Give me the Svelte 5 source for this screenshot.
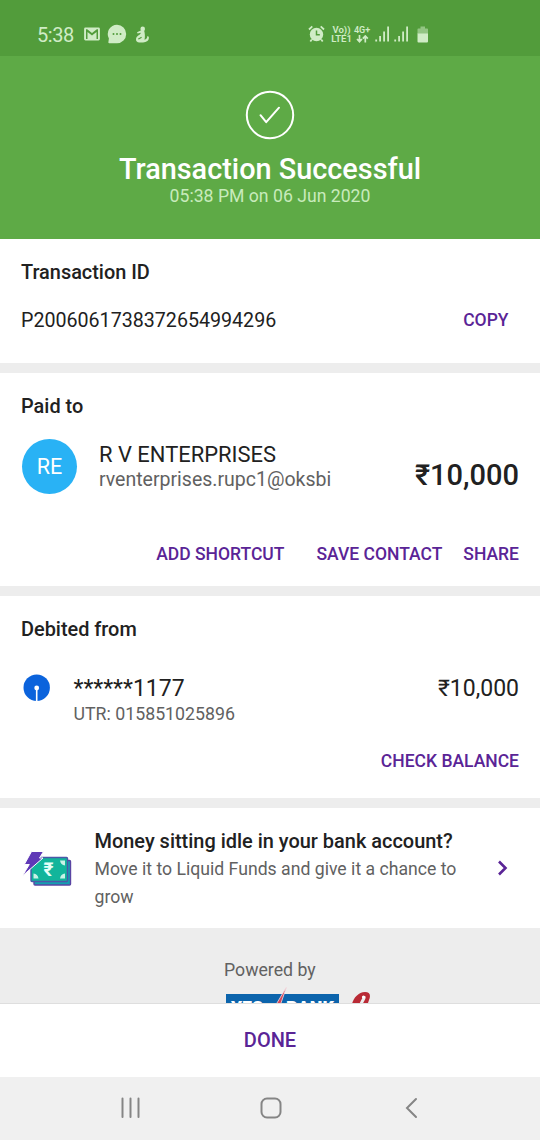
<script>
  const actions = ['ADD SHORTCUT', 'SAVE CONTACT', 'SHARE'];
</script>

<div class="screen">
  <div class="status">
    <span class="clock">5:38</span>
    <svg class="left-icons" width="66" height="20" viewBox="0 0 66 20">
      <path fill="#d0ecc6" fill-rule="evenodd" d="M1.500 3.500h13a1.400 1.400 0 0 1 1.400 1.400v10.200a1.400 1.400 0 0 1-1.400 1.400h-13A1.400 1.400 0 0 1 .1 15.100V4.900A1.400 1.400 0 0 1 1.500 3.500zM2 5.200v9.800h1.500V8L8 11.500l4.500-3.500v7H14V5.200h-1.200L8 9 3.200 5.200z" />
      <path fill="#d0ecc6" d="M33 .8a9.200 9.200 0 1 1 0 18.400H25.200c-.7 0-1-.5-.8-1.200l.5-3.500A9.200 9.200 0 0 1 33 .8z" />
      <g fill="#529c3b"><circle cx="29.500" cy="10" r="1" /><circle cx="33" cy="10" r="1" /><circle cx="36.500" cy="10" r="1" /></g>
      <g fill="#d0ecc6">
        <circle cx="58.700" cy="4.900" r="2.300" />
        <path d="M57.300 6.200l-4.300 2 .6 1.400 3.100-.9c.4 1.800-4.300 2.900-4.700 6.200-.3 2.300 1.300 3.500 3.300 3.500h3.700c3.300 0 6.500-2 5.800-5.700l-1.500-.7c.2 2-1.100 3.300-2.800 3.800.7-3 .5-6.700-.5-9.600z" />
      </g>
      <path d="M54.300 15.200c1.200-1 2.300-.8 3.200-2" stroke="#529c3b" stroke-width="1.100" fill="none" />
    </svg>
    <div class="right-icons">
      <svg width="17" height="18" viewBox="0 0 17 18">
        <circle cx="8.500" cy="9.500" r="6.700" fill="#d0ecc6" />
        <path d="M1 4.500L4.300 1.400M16 4.500l-3.300-3.100M3.800 14.500l-1.500 2M13.200 14.500l1.500 2" stroke="#d0ecc6" stroke-width="1.800" fill="none" />
        <path d="M8.500 5.500v4.300h3.300" stroke="#529c3b" stroke-width="1.500" fill="none" />
      </svg>
      <div class="volte"><span>Vo))</span><span>LTE1</span></div>
      <div class="data">
        <span>4G+</span>
        <svg width="13" height="8" viewBox="0 0 13 8"><path d="M3.500 0v6.500M1 4l2.500 2.700L6 4M9.300 7.500V1M6.800 3.700L9.300 1l2.500 2.700" fill="none" stroke="#d0ecc6" stroke-width="1.700" /></svg>
      </div>
      {#each [0, 1] as sim}
        <svg class="signal" width="15" height="16" viewBox="0 0 15 16"><path fill="#d0ecc6" d="M.3 13.500h1.800v2H.3zM4.200 10h1.800v5.500H4.200zM8.200 5.500H10v10H8.200zM12.200.5H14v15h-1.800z" /></svg>
      {/each}
      <svg class="battery" width="12" height="17" viewBox="0 0 12 17"><path fill="#93c583" d="M3.500.5h4.500v2h2.200a.8.8 0 0 1 .8.800V8H.500V3.300A.8.8 0 0 1 1.300 2.500h2.200z" /><path fill="#d0ecc6" d="M.5 7.500H11v8a1 1 0 0 1-1 1H1.500a1 1 0 0 1-1-1z" /></svg>
    </div>
  </div>

  <header class="hero">
    <svg width="50" height="50" viewBox="0 0 50 50" fill="none" stroke="#fff">
      <circle cx="25" cy="25" r="23.200" stroke-width="2" />
      <path d="M15.500 25.200l5.700 7L34 17.700" stroke-width="2" stroke-linecap="round" stroke-linejoin="round" />
    </svg>
    <h1>Transaction Successful</h1>
    <p>05:38 PM on 06 Jun 2020</p>
  </header>

  <section class="txn">
    <h2>Transaction ID</h2>
    <div class="row id-row">
      <span class="txid">P2006061738372654994296</span>
      <span class="link">COPY</span>
    </div>
  </section>

  <section class="paid">
    <h2>Paid to</h2>
    <div class="row payee">
      <div class="avatar">RE</div>
      <div class="who">
        <div class="name">R V ENTERPRISES</div>
        <div class="vpa">rventerprises.rupc1@oksbi</div>
      </div>
      <div class="total">₹10,000</div>
    </div>
    <div class="actions">
      {#each actions as label}
        <span class="link">{label}</span>
      {/each}
    </div>
  </section>

  <section class="debit">
    <h2>Debited from</h2>
    <div class="row account">
      <svg class="bank" width="28" height="28" viewBox="0 0 28 28">
        <circle cx="13.700" cy="13.700" r="13.200" fill="#0b63dc" />
        <circle cx="13.700" cy="14" r="2.400" fill="#fff" />
        <path d="M13.700 14v13" stroke="#fff" stroke-width="1.600" />
      </svg>
      <div class="who">
        <div class="acct">******1177</div>
        <div class="utr">UTR: 015851025896</div>
      </div>
      <div class="amount">₹10,000</div>
    </div>
    <div class="balance"><span class="link">CHECK BALANCE</span></div>
  </section>

  <section class="promo">
    <svg class="cash" width="50" height="37" viewBox="0 0 50 37">
      <rect x="12" y="9.500" width="36.500" height="24.500" rx="1" fill="#149fb0" stroke="#5a45a3" stroke-width="1.400" />
      <rect x="9" y="6.500" width="36.500" height="24" rx="1" fill="#12b59b" stroke="#4c58a8" stroke-width="1.400" />
      <path fill="#c9f3e7" d="M38 9.500h5v5a6 6 0 0 1-5-5zM43 22.500v5h-5a6 6 0 0 1 5-5zM11.500 22.500v5h5a6 6 0 0 0-5-5z" />
      <text x="26.500" y="24.500" text-anchor="middle">₹</text>
      <path d="M9.500.500H21.500L17.500 7H21L.3 25l7-11.500H2.300z" fill="#6039b7" stroke="#fff" stroke-width="1" />
    </svg>
    <div class="promo-copy">
      <h3>Money sitting idle in your bank account?</h3>
      <p>Move it to Liquid Funds and give it a chance to grow</p>
    </div>
    <svg class="chevron" width="12" height="18" viewBox="0 0 12 18"><path d="M2 2.500L8.500 9 2 15.500" fill="none" stroke="#5a2496" stroke-width="2.600" /></svg>
  </section>

  <div class="powered">
    <span>Powered by</span>
    <svg width="150" height="45" viewBox="0 0 150 45">
      <rect x="1" y="8" width="113" height="31" fill="#0c64ac" />
      <g class="wordmark"><text x="6" y="27.500" textLength="32" lengthAdjust="spacingAndGlyphs">YES</text><text x="61" y="27.500" textLength="48" lengthAdjust="spacingAndGlyphs">BANK</text></g>
      <path d="M49 22L61.500 1 56 17l-5 12z" fill="#d64355" stroke="#f2dfe5" stroke-width=".8" />
      <path d="M127 18c1-5 6-12 13-12 5 0 6 3 4 8l-2 6h-6c3-4 6-9 4-10-2 0-4 4-6 9z" fill="#b92a35" />
      <circle cx="138.500" cy="11" r="1.600" fill="#fff" />
    </svg>
  </div>

  <div class="done">DONE</div>

  <nav>
    <svg width="22" height="24" viewBox="0 0 22 24"><path d="M2.500 2.500v18.500M10.500 2.500v18.500M18.500 2.500v18.500" stroke="#858585" stroke-width="2" stroke-linecap="round" /></svg>
    <svg width="24" height="24" viewBox="0 0 24 24"><rect x="2.500" y="2.500" width="19" height="19" rx="5.500" fill="none" stroke="#858585" stroke-width="2" /></svg>
    <svg width="16" height="24" viewBox="0 0 16 24"><path d="M12 3L3 12l9 9" fill="none" stroke="#858585" stroke-width="2" stroke-linecap="round" /></svg>
  </nav>
</div>

<style>
  :global(body) { margin: 0; background: #ededed; }
  .screen { width: 540px; height: 1140px; display: flex; flex-direction: column; overflow: hidden; background: #ededed; font-family: Roboto, sans-serif; color: #212121; }
  .screen > * { box-sizing: border-box; flex: none; }
  svg { display: block; flex: none; }
  h1, h2, h3, p { margin: 0; font-weight: 500; }
  .status { height: 56px; background: #529c3b; color: #d0ecc6; display: flex; align-items: center; padding: 12px 111px 0 37px; }
  .clock { font-size: 20px; line-height: 24px; width: 47px; padding-top: 1px; letter-spacing: -.4px; }
  .right-icons { margin-left: auto; display: flex; align-items: center; }
  .volte, .data { display: flex; flex-direction: column; font-size: 9.500px; line-height: 9px; font-weight: 600; }
  .volte { margin-left: 5px; width: 23px; align-items: center; }
  .data { width: 18px; align-items: center; }
  .data span { font-size: 9px; }
  .signal { margin-left: 4px; }
  .battery { margin-left: 8px; }
  .hero { height: 183px; background: #5eaa46; display: flex; flex-direction: column; align-items: center; color: #fff; padding-top: 34px; }
  h1 { font-size: 28.850px; line-height: 36px; margin-top: 11px; }
  .hero p { font-size: 17.650px; line-height: 18px; font-weight: 400; color: #c8ebbc; }
  section { background: #fff; padding: 22px 21px 0; }
  .txn { height: 124px; margin-bottom: 10px; }
  .paid { height: 213px; margin-bottom: 10px; }
  .debit { height: 202px; margin-bottom: 10px; }
  h2 { font-size: 19.900px; line-height: 24px; }
  .row { display: flex; }
  .id-row { margin-top: 21px; line-height: 28px; justify-content: space-between; padding-right: 10.500px; }
  .txid { font-size: 19.650px; padding-top: 1px; }
  .link { color: #5a2496; font-size: 17.500px; font-weight: 500; }
  .payee { margin-top: 20px; height: 55px; align-items: center; }
  .avatar { width: 55px; height: 55px; margin-left: 1px; margin-right: 22px; border-radius: 50%; background: #29b2f5; color: #fff; font-size: 21.500px; line-height: 55px; text-align: center; }
  .who { flex: 1; }
  .name { font-size: 21.950px; line-height: 26px; padding-top: 1px; }
  .vpa { font-size: 19.500px; line-height: 24px; color: #616161; }
  .total { font-size: 29px; font-weight: 500; padding-top: 17px; }
  .actions { display: flex; justify-content: flex-end; margin-top: 48px; line-height: 24px; }
  .actions .link:nth-child(2) { margin: 0 21px 0 32px; }
  .account { margin-top: 33px; line-height: 26px; }
  .bank { margin: -1px 9px 0 2px; }
  .account .who { padding-left: 13.500px; }
  .acct, .amount { font-size: 23px; position: relative; top: 1px; }
  .utr { font-size: 17.750px; color: #616161; }
  .balance { margin-top: 22px; line-height: 24px; text-align: right; }
  .promo { height: 120px; padding: 20px 31px 0 21.500px; display: flex; }
  .cash { margin: 23px 23px 0 0; }
  .cash text { font: 700 19px Roboto, sans-serif; fill: #e6fff8; }
  .promo-copy { width: 390px; }
  h3 { font-size: 19.950px; line-height: 26px; white-space: nowrap; }
  .promo-copy p { margin-top: 1px; font-size: 17.650px; line-height: 28px; font-weight: 400; color: #616161; }
  .chevron { margin: 31px 0 0 auto; }
  .powered { height: 75px; overflow: hidden; padding: 30px 0 0 224px; font-size: 17.700px; line-height: 24px; color: #616161; }
  .powered svg { margin: 4px 0 0 1px; }
  .wordmark text { font: 900 17.500px Roboto, sans-serif; fill: #fff; }
  .done { height: 74px; border-top: 1px solid #dedede; background: #fff; color: #5a2496; font-size: 20px; font-weight: 500; line-height: 73px; text-align: center; }
  nav { height: 63px; background: #f0f0f0; display: grid; grid-template-columns: 139px 145px auto; align-items: center; padding: 0 0 2px 120px; }
</style>
